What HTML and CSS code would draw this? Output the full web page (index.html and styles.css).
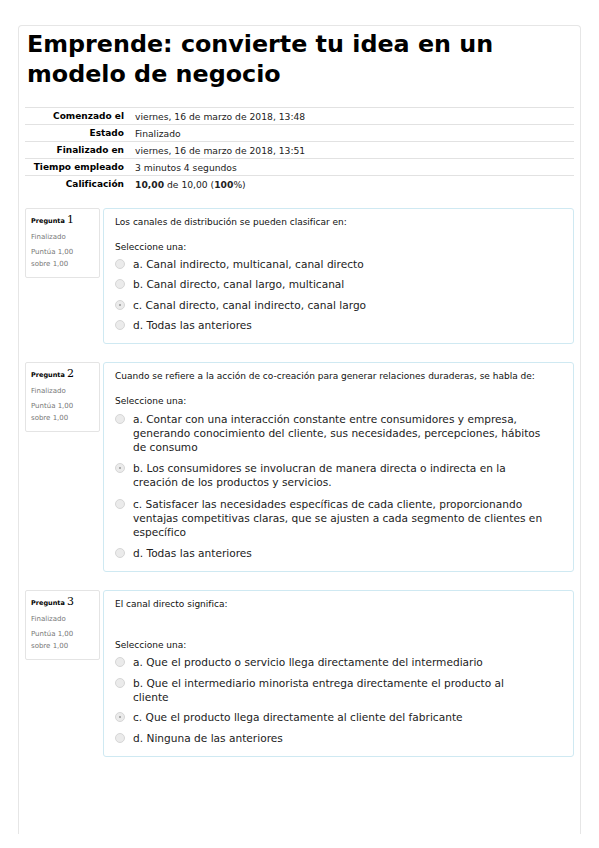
FILE: index.html
```html
<!DOCTYPE html>
<html lang="es">
<head>
<meta charset="utf-8">
<title>Emprende</title>
<link rel="stylesheet" href="styles.css">
</head>
<body>
<div class="page">
  <div class="card">
    <h1 class="title">Emprende: convierte tu idea en un modelo de negocio</h1>
    <table class="summary">
      <tr><th>Comenzado el</th><td>viernes, 16 de marzo de 2018, 13:48</td></tr>
      <tr><th>Estado</th><td>Finalizado</td></tr>
      <tr><th>Finalizado en</th><td>viernes, 16 de marzo de 2018, 13:51</td></tr>
      <tr><th>Tiempo empleado</th><td>3 minutos 4 segundos</td></tr>
      <tr><th>Calificación</th><td><b>10,00</b> de 10,00 (<b>100</b>%)</td></tr>
    </table>

    <div class="que">
      <div class="info">
        <div class="qno">Pregunta <span class="num">1</span></div>
        <div class="state">Finalizado</div>
        <div class="grade">Puntúa 1,00 sobre 1,00</div>
      </div>
      <div class="content">
        <p class="qtext">Los canales de distribución se pueden clasificar en:</p>
        <div class="prompt">Seleccione una:</div>
        <div class="answer">
          <div class="opt"><span class="radio"></span><span class="lbl">a. Canal indirecto, multicanal, canal directo</span></div>
          <div class="opt"><span class="radio"></span><span class="lbl">b. Canal directo, canal largo, multicanal</span></div>
          <div class="opt"><span class="radio on"></span><span class="lbl">c. Canal directo, canal indirecto, canal largo</span></div>
          <div class="opt"><span class="radio"></span><span class="lbl">d. Todas las anteriores</span></div>
        </div>
      </div>
    </div>

    <div class="que">
      <div class="info">
        <div class="qno">Pregunta <span class="num">2</span></div>
        <div class="state">Finalizado</div>
        <div class="grade">Puntúa 1,00 sobre 1,00</div>
      </div>
      <div class="content">
        <p class="qtext">Cuando se refiere a la acción de co-creación para generar relaciones duraderas, se habla de:</p>
        <div class="prompt">Seleccione una:</div>
        <div class="answer loose">
          <div class="opt"><span class="radio"></span><span class="lbl">a. Contar con una interacción constante entre consumidores y empresa,<br>generando conocimiento del cliente, sus necesidades, percepciones, hábitos<br>de consumo</span></div>
          <div class="opt"><span class="radio on"></span><span class="lbl">b. Los consumidores se involucran de manera directa o indirecta en la<br>creación de los productos y servicios.</span></div>
          <div class="opt"><span class="radio"></span><span class="lbl">c. Satisfacer las necesidades específicas de cada cliente, proporcionando<br>ventajas competitivas claras, que se ajusten a cada segmento de clientes en<br>específico</span></div>
          <div class="opt"><span class="radio"></span><span class="lbl">d. Todas las anteriores</span></div>
        </div>
      </div>
    </div>

    <div class="que">
      <div class="info">
        <div class="qno">Pregunta <span class="num">3</span></div>
        <div class="state">Finalizado</div>
        <div class="grade">Puntúa 1,00 sobre 1,00</div>
      </div>
      <div class="content">
        <p class="qtext">El canal directo significa:</p>
        <p class="qtext spacer">&nbsp;</p>
        <div class="prompt">Seleccione una:</div>
        <div class="answer">
          <div class="opt"><span class="radio"></span><span class="lbl">a. Que el producto o servicio llega directamente del intermediario</span></div>
          <div class="opt"><span class="radio"></span><span class="lbl">b. Que el intermediario minorista entrega directamente el producto al<br>cliente</span></div>
          <div class="opt"><span class="radio on"></span><span class="lbl">c. Que el producto llega directamente al cliente del fabricante</span></div>
          <div class="opt"><span class="radio"></span><span class="lbl">d. Ninguna de las anteriores</span></div>
        </div>
      </div>
    </div>
  </div>
</div>
</body>
</html>
```

FILE: styles.css
```css
html, body {
  margin: 0;
  padding: 0;
  background: #fff;
}
body {
  font-family: "DejaVu Sans", Verdana, sans-serif;
  color: #222;
}
.page {
  padding: 25px 18px 0 18px;
}
.card {
  border: 1px solid #e6e6e6;
  border-bottom: none;
  border-radius: 4px 4px 0 0;
  height: 808px;
  padding: 0 6px;
}
.title {
  font-size: 23.8px;
  line-height: 30px;
  font-weight: bold;
  margin: 3px 0 0 2px;
  color: #000;
}
.summary {
  margin-top: 18px;
  width: 100%;
  border-collapse: collapse;
  font-size: 9px;
}
.summary tr {
  border-top: 1px solid #e2e2e2;
  height: 17px;
}
.summary th {
  text-align: right;
  width: 99px;
  padding: 0 6px 0 0;
  font-weight: bold;
  color: #000;
  white-space: nowrap;
}
.summary td {
  padding: 0 5px;
  font-size: 9.2px;
  color: #222;
}
.que {
  display: flex;
  align-items: flex-start;
  gap: 3px;
  margin-top: 15px;
}
.que + .que {
  margin-top: 18px;
}
.info {
  width: 64px;
  flex: none;
  border: 1px solid #e4e4e4;
  border-radius: 2px;
  padding: 4px 4px 7px 5px;
  color: #777;
}
.qno {
  font-size: 6.5px;
  font-weight: bold;
  color: #000;
}
.qno .num {
  font-size: 11px;
  font-weight: normal;
  font-family: "DejaVu Serif", serif;
}
.state {
  font-size: 7px;
  margin-top: 7px;
}
.grade {
  font-size: 7px;
  margin-top: 5px;
  line-height: 12px;
  max-width: 50px;
}
.content {
  flex: 1;
  border: 1px solid #cfe9f2;
  border-radius: 3px;
  padding: 8px 6px 11px 11px;
}
.qtext {
  font-size: 9px;
  margin: 0 0 15px 0;
  color: #111;
}
.qtext.spacer {
  margin-bottom: 6.5px;
}
.prompt {
  font-size: 9px;
  color: #111;
  margin-bottom: 5px;
}
.answer.loose {
  padding-top: 1px;
}
.opt {
  display: flex;
  align-items: flex-start;
  font-size: 10.6px;
  line-height: 14px;
  margin-bottom: 6.5px;
  color: #222;
}
.answer.loose .opt {
  margin-bottom: 7.3px;
}
.opt:last-child,
.answer.loose .opt:last-child {
  margin-bottom: 0;
}
.radio {
  flex: none;
  width: 10px;
  height: 10px;
  border-radius: 50%;
  border: 1px solid #d6d6d6;
  background: #ebebeb;
  box-sizing: border-box;
  margin: 2px 8px 0 0;
  position: relative;
}
.radio.on::after {
  content: "";
  position: absolute;
  left: 3px;
  top: 3px;
  width: 2px;
  height: 2px;
  border-radius: 50%;
  background: #999;
}
```
